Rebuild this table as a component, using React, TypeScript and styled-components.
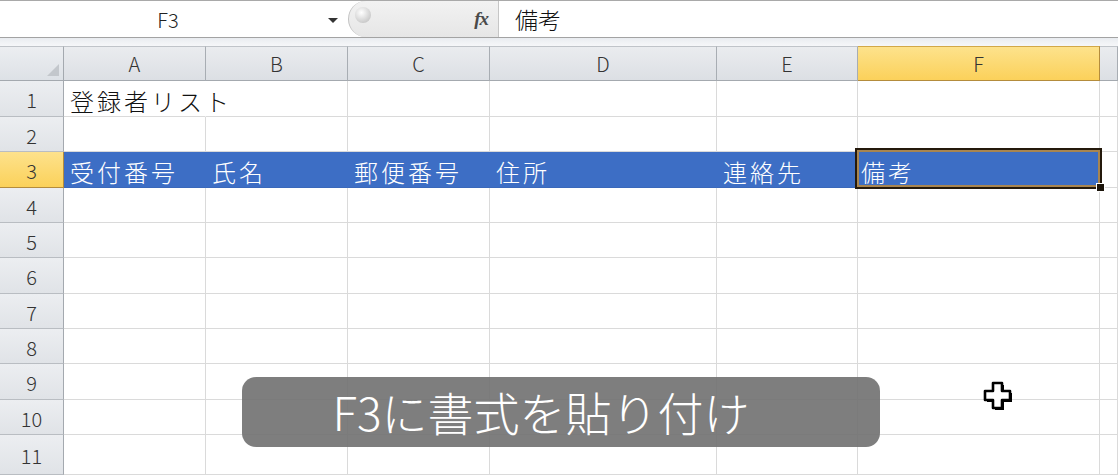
import styled, { createGlobalStyle } from "styled-components";

const GlobalStyle = createGlobalStyle`
    html, body {
        margin: 0;
        padding: 0;
        background: #ffffff;
        overflow: hidden;
    }
    body {
        font-family: "Noto Sans CJK JP", "Noto Sans", sans-serif;
    }
`;

const Page = styled.div`
    position: relative;
    width: 1118px;
    height: 475px;
    overflow: hidden;
    background: #ffffff;
`;

// formula bar
const FormulaBar = styled.div`
    display: flex;
    height: 38px;
    box-sizing: border-box;
    border-top: 1px solid #a9a9a9;
    border-bottom: 1px solid #a3a3a3;
    background: #ffffff;
`;
const NameBox = styled.div`
    width: 348px;
    display: flex;
    align-items: center;
    box-sizing: border-box;
    padding-right: 10px;
`;
const NameText = styled.div`
    flex: 1;
    text-align: center;
    font-family: "Noto Sans CJK JP", sans-serif;
    font-size: 20px;
    font-weight: 300;
    color: #222;
    padding-left: 8px;
`;
const DropArrow = styled.div`
    width: 0;
    height: 0;
    border-left: 5px solid transparent;
    border-right: 5px solid transparent;
    border-top: 5px solid #333;
    margin-top: 3px;
`;
const Splitter = styled.div`
    width: 150px;
    display: flex;
    align-items: center;
    justify-content: space-between;
    box-sizing: border-box;
    padding: 0 10px 0 6px;
    background: linear-gradient(#f2f2f2, #e6e6e6);
    border-left: 1px solid #c2c2c2;
    border-radius: 18px 0 0 18px;
`;
const Knob = styled.div`
    width: 16px;
    height: 16px;
    border-radius: 50%;
    background: radial-gradient(circle at 40% 35%, #ffffff, #d0d0d0 65%, #b8b8b8);
    margin-top: -8px;
`;
const Fx = styled.div`
    font-family: "Liberation Serif", "DejaVu Serif", serif;
    font-style: italic;
    font-weight: bold;
    font-size: 19px;
    color: #4a4a4a;
    letter-spacing: -1px;
`;
const FormulaInput = styled.div`
    flex: 1;
    display: flex;
    align-items: center;
    padding-left: 16px;
    border-left: 1px solid #c6c6c6;
    font-size: 23px;
    font-weight: 300;
    color: #111;
`;

const Gap = styled.div`
    height: 8px;
    background: linear-gradient(#e9ecf0, #f6f7f9);
`;

// grid
const Sheet = styled.div`
    display: flex;
    flex-direction: column;
`;
const Row = styled.div<{ $h: number }>`
    display: flex;
    height: ${(p) => p.$h}px;
`;
const Corner = styled.div`
    position: relative;
    width: 64px;
    box-sizing: border-box;
    background: linear-gradient(#eceef1, #dde1e6);
    border-right: 1px solid #a4a9af;
    border-bottom: 1px solid #a4a9af;
    border-top: 1px solid #c0c4c9;
    &:after {
        content: "";
        position: absolute;
        right: 4px;
        bottom: 4px;
        width: 0;
        height: 0;
        border-left: 12px solid transparent;
        border-bottom: 12px solid #c3c7cc;
    }
`;
const ColHead = styled.div<{ $w: number; $on?: boolean }>`
    width: ${(p) => p.$w}px;
    flex: ${(p) => (p.$w ? "none" : "1")};
    display: flex;
    align-items: center;
    justify-content: center;
    box-sizing: border-box;
    font-family: "Noto Sans CJK JP", sans-serif;
    font-size: 20px;
    font-weight: 300;
    color: #333;
    background: ${(p) => (p.$on ? "linear-gradient(#fde28c, #fbd15a)" : "linear-gradient(#eaecef, #dcdfe4)")};
    border-top: 1px solid ${(p) => (p.$on ? "#d2a848" : "#c0c4c9")};
    border-right: 1px solid ${(p) => (p.$on ? "#b48c3c" : "#a8adb3")};
    border-bottom: 1px solid ${(p) => (p.$on ? "#b48c3c" : "#a4a9af")};
`;
const RowHead = styled.div<{ $on?: boolean }>`
    width: 64px;
    display: flex;
    align-items: center;
    justify-content: center;
    box-sizing: border-box;
    font-family: "Noto Sans CJK JP", sans-serif;
    font-size: 20px;
    font-weight: 300;
    color: #333;
    padding-top: 2px;
    background: ${(p) => (p.$on ? "linear-gradient(#fde28c, #fbd15a)" : "linear-gradient(#eceef1, #e0e3e7)")};
    border-right: 1px solid ${(p) => (p.$on ? "#b48c3c" : "#a4a9af")};
    border-bottom: 1px solid ${(p) => (p.$on ? "#b48c3c" : "#b9bdc2")};
`;
const Cell = styled.div<{ $w: number; $fill?: boolean; $spill?: boolean; $anchor?: boolean }>`
    position: ${(p) => (p.$anchor ? "relative" : "static")};
    width: ${(p) => p.$w}px;
    flex: ${(p) => (p.$w ? "none" : "1")};
    display: flex;
    align-items: center;
    box-sizing: border-box;
    padding: 3px 0 0 ${(p) => (p.$anchor ? 3 : 6)}px;
    white-space: nowrap;
    font-family: "Noto Sans CJK JP", sans-serif;
    font-size: 24px;
    font-weight: 300;
    letter-spacing: 3px;
    color: ${(p) => (p.$fill ? "#ffffff" : "#111111")};
    background: ${(p) => (p.$fill ? "#3d6ec5" : "transparent")};
    border-right: 1px solid ${(p) => (p.$fill ? "#3d6ec5" : p.$spill ? "transparent" : "#dadada")};
    border-bottom: 1px solid ${(p) => (p.$fill ? "#3a68ba" : "#dadada")};
`;
const Selection = styled.div`
    position: absolute;
    left: -3px;
    top: -4px;
    right: -3px;
    bottom: -2px;
    border: 2px solid #24190c;
    box-shadow: inset 0 0 0 2px #a88550;
    pointer-events: none;
`;
const FillHandle = styled.div`
    position: absolute;
    right: -5px;
    bottom: -5px;
    width: 7px;
    height: 7px;
    background: #1b140a;
    border: 1px solid #ffffff;
`;

// overlays
const Caption = styled.div`
    position: absolute;
    left: 242px;
    top: 377px;
    width: 638px;
    height: 70px;
    border-radius: 14px;
    background: rgba(112, 112, 112, 0.9);
    display: flex;
    align-items: center;
    justify-content: center;
    color: #ffffff;
    font-family: "Noto Sans CJK JP", sans-serif;
    font-size: 46px;
    font-weight: 300;
    padding: 0 40px 2px 0;
    box-sizing: border-box;
`;
const Cursor = styled.svg`
    position: absolute;
    left: 981px;
    top: 379px;
`;

const columns = [
    { key: "A", w: 142 },
    { key: "B", w: 142 },
    { key: "C", w: 142 },
    { key: "D", w: 227 },
    { key: "E", w: 141 },
    { key: "F", w: 242 },
    { key: "G", w: 0 },
];

const rowHeights = [36, 35, 36, 35, 35, 36, 35, 35, 36, 35, 40];

const data: Record<number, string[]> = {
    1: ["登録者リスト"],
    3: ["受付番号", "氏名", "郵便番号", "住所", "連絡先", "備考"],
};

function App() {
    return (
        <Page>
            <GlobalStyle />
            <FormulaBar>
                <NameBox>
                    <NameText>F3</NameText>
                    <DropArrow />
                </NameBox>
                <Splitter>
                    <Knob />
                    <Fx>fx</Fx>
                </Splitter>
                <FormulaInput>備考</FormulaInput>
            </FormulaBar>
            <Gap />
            <Sheet>
                <Row $h={35}>
                    <Corner />
                    {columns.map((c) => (
                        <ColHead key={c.key} $w={c.w} $on={c.key === "F"}>
                            {c.key !== "G" ? c.key : ""}
                        </ColHead>
                    ))}
                </Row>
                {rowHeights.map((h, i) => {
                    const n = i + 1;
                    const values = data[n] || [];
                    return (
                        <Row key={n} $h={h}>
                            <RowHead $on={n === 3}>{n}</RowHead>
                            {columns.map((c, ci) => {
                                const selected = n === 3 && c.key === "F";
                                return (
                                    <Cell
                                        key={c.key}
                                        $w={c.w}
                                        $fill={n === 3 && c.key !== "G"}
                                        $spill={n === 1 && c.key === "A"}
                                        $anchor={selected}
                                    >
                                        {values[ci] || ""}
                                        {selected && (
                                            <Selection>
                                                <FillHandle />
                                            </Selection>
                                        )}
                                    </Cell>
                                );
                            })}
                        </Row>
                    );
                })}
            </Sheet>
            <Caption>F3に書式を貼り付け</Caption>
            <Cursor width="36" height="36" viewBox="0 0 36 36">
                <path d="M12 4 H21 V12 H29 V21 H21 V29 H12 V21 H4 V12 H12 Z" fill="#000" transform="translate(2 2)" />
                <path d="M12 4 H21 V12 H29 V21 H21 V29 H12 V21 H4 V12 H12 Z" fill="#fff" stroke="#000" strokeWidth="2.6" strokeLinejoin="round" />
            </Cursor>
        </Page>
    );
}

export default App;
